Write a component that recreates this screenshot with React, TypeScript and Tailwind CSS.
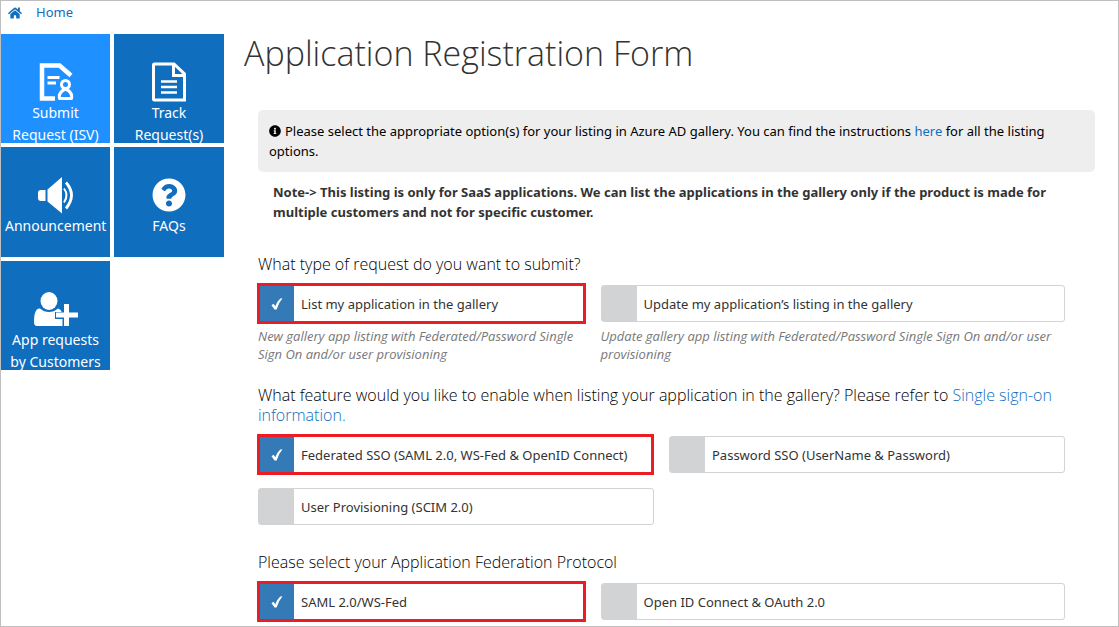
import React from "react";
import { FaHome, FaInfoCircle, FaQuestionCircle } from "react-icons/fa";

const SubmitIcon = () => (
  <svg width="36" height="38" viewBox="0 0 36 38" fill="none" stroke="#fff">
    <path d="M17 35.5H4V2.5H21.500L33 12.5" strokeWidth="4.500" />
    <path d="M9.500 14.5H21.500M9.500 20H18" strokeWidth="2.8" />
    <circle cx="27.5" cy="21.500" r="4" strokeWidth="3" />
    <path d="M21.500 35.5C20.5 30.500 24 27.500 27.500 26C31 27.500 34.500 30.500 33.500 35.500Z" strokeWidth="3" strokeLinejoin="round" />
  </svg>
);

const TrackIcon = () => (
  <svg width="36" height="40" viewBox="0 0 36 40" fill="none" stroke="#fff" strokeWidth="3">
    <path d="M3.500 2H23L33.500 12V38H3.500A1 1 0 0 1 2.500 37V3A1 1 0 0 1 3.500 2Z" />
    <path d="M22.500 2V13.500H33" />
    <path d="M10 19.500H26M10 25H26M10 30.500H26" strokeWidth="2.600" />
  </svg>
);

const SpeakerIcon = () => (
  <svg width="38" height="38" viewBox="0 0 38 38" fill="none">
    <path d="M8.500 14V25H4Q1 25 1 22V17Q1 14 4 14Z" fill="#fff" />
    <path d="M10.500 13.500L25 1V37.500L10.500 25.500Z" fill="#fff" />
    <path d="M27 12.500Q32 19 27 26.500" stroke="#fff" strokeWidth="2" />
    <path d="M29 6.500Q40 19 29 32.500" stroke="#fff" strokeWidth="2.800" />
  </svg>
);

const UserPlusIcon = () => (
  <svg width="46" height="36" viewBox="0 0 46 36" fill="#fff">
    <ellipse cx="16" cy="10" rx="8.500" ry="9" />
    <path d="M7 17.500Q11 21 16 21Q21 21 25 17.500Q28 18.500 28.500 20.500V21H22V28H29.500V35H4Q1 35 1 31Q1 17 7 17.500Z" />
    <path d="M31 13H36V21.500H45V26.500H36V35H31V26.500H23V21.500H31Z" />
  </svg>
);

const CheckIcon = () => (
  <svg className="pointer-events-none absolute top-1/2 left-[18px] -translate-x-1/2 -translate-y-1/2" width="12" height="12" viewBox="0 0 12 12" fill="#fff" aria-hidden="true">
    <path d="M.5 7.200L2.600 5.800L4.300 8.200Q6 3.500 9.300.6L11.500.3Q7.500 5 5.600 11.500H3.500Z" />
  </svg>
);

type TileProps = { icon: React.ReactNode; label: string; active?: boolean };

const Tile = ({ icon, label, active }: TileProps) => (
  <a
    href="#"
    className={`flex flex-col items-center overflow-hidden pt-7 text-center text-[14px] leading-[22px] text-white ${active ? "bg-[#1e90ff]" : "bg-[#106ebe]"}`}
  >
    <span className="flex h-10 shrink-0 items-center">{icon}</span>
    <span className="w-full px-1">{label}</span>
  </a>
);

type OptionProps = { label: string; hint?: string; span: string; checked?: boolean };

const Option = ({ label, hint, span, checked }: OptionProps) => (
  <div className={span}>
    <label className="relative flex h-[37px] items-center rounded-[3px] border border-[#d1d3d4] text-[#333]">
      <input
        type="checkbox"
        defaultChecked={checked}
        className="h-full w-[35px] shrink-0 appearance-none bg-[#d1d3d4] checked:bg-[#337ab7]"
      />
      {checked && <CheckIcon />}
      <span className="pl-[7px] text-[13px] leading-5">{label}</span>
      {checked && <span className="pointer-events-none absolute -inset-y-[3px] -right-px -left-0.5 border-3 border-[#ed1c24]" />}
    </label>
    {hint && <p className="mt-[5px] font-['Open_Sans',sans-serif] text-[13px] leading-[18px] text-[#777] italic">{hint}</p>}
  </div>
);

const questionClass = "font-['Open_Sans',sans-serif] text-[16px] leading-5 font-light";

export default function App() {
  return (
    <div className="min-h-screen border border-[#bfbfbf] bg-white font-['Noto_Sans','Open_Sans',sans-serif] text-black">
      <nav className="flex h-[33px] items-start gap-3.5 pt-px pl-[7px] text-[13px] leading-5 text-[#106ebe]">
        <FaHome className="mt-1 h-3.5 w-3.5" />
        <a href="#">Home</a>
      </nav>
      <div className="flex items-start">
        <aside className="grid h-[336px] shrink-0 grid-cols-[109px_110px] grid-rows-3 gap-1">
          <Tile active icon={<SubmitIcon />} label="Submit Request (ISV)" />
          <Tile icon={<TrackIcon />} label="Track Request(s)" />
          <Tile icon={<SpeakerIcon />} label="Announcement" />
          <Tile icon={<FaQuestionCircle size={34} />} label="FAQs" />
          <Tile icon={<UserPlusIcon />} label="App requests by Customers" />
        </aside>
        <main className="min-w-0 flex-1 pr-[23px] pl-5">
          <h1 className="font-['Open_Sans',sans-serif] text-[34px] leading-[38px] font-light text-[#333]">Application Registration Form</h1>
          <div className="pl-3.5">
            <div className="mt-[38px] rounded-[5px] bg-[#eee] px-[11px] py-[11px] text-[13px] leading-5">
              <FaInfoCircle className="mr-1 inline h-3 w-3 align-[-1px]" />
              Please select the appropriate option(s) for your listing in Azure AD gallery. You can find the instructions{" "}
              <a href="#" className="text-[#106ebe]">here</a> for all the listing options.
            </div>
            <p className="mt-2.5 px-[15px] text-[13px] leading-5 font-bold text-[#333]">
              Note-&gt; This listing is only for SaaS applications. We can list the applications in the gallery only if the product is made for multiple customers and not for specific customer.
            </p>
            <form className="pr-[30px]">
              <h2 className={`mt-8 ${questionClass}`}>What type of request do you want to submit?</h2>
              <div className="mt-[11px] grid grid-cols-12 gap-x-[15px] gap-y-[15px]">
                <Option checked span="col-span-5" label="List my application in the gallery" hint="New gallery app listing with Federated/Password Single Sign On and/or user provisioning" />
                <Option span="col-span-7" label="Update my application’s listing in the gallery" hint="Update gallery app listing with Federated/Password Single Sign On and/or user provisioning" />
              </div>
              <h2 className={`mt-[22px] ${questionClass}`}>
                What feature would you like to enable when listing your application in the gallery? Please refer to{" "}
                <a href="#" className="text-[#106ebe]">Single sign-on information.</a>
              </h2>
              <div className="mt-[11px] grid grid-cols-12 gap-x-[15px] gap-y-[15px]">
                <Option checked span="col-span-6" label="Federated SSO (SAML 2.0, WS-Fed & OpenID Connect)" />
                <Option span="col-span-6" label="Password SSO (UserName & Password)" />
                <Option span="col-span-6" label="User Provisioning (SCIM 2.0)" />
              </div>
              <h2 className={`mt-[27px] ${questionClass}`}>Please select your Application Federation Protocol</h2>
              <div className="mt-[11px] grid grid-cols-12 gap-x-[15px]">
                <Option checked span="col-span-5" label="SAML 2.0/WS-Fed" />
                <Option span="col-span-7" label="Open ID Connect & OAuth 2.0" />
              </div>
            </form>
          </div>
        </main>
      </div>
    </div>
  );
}
